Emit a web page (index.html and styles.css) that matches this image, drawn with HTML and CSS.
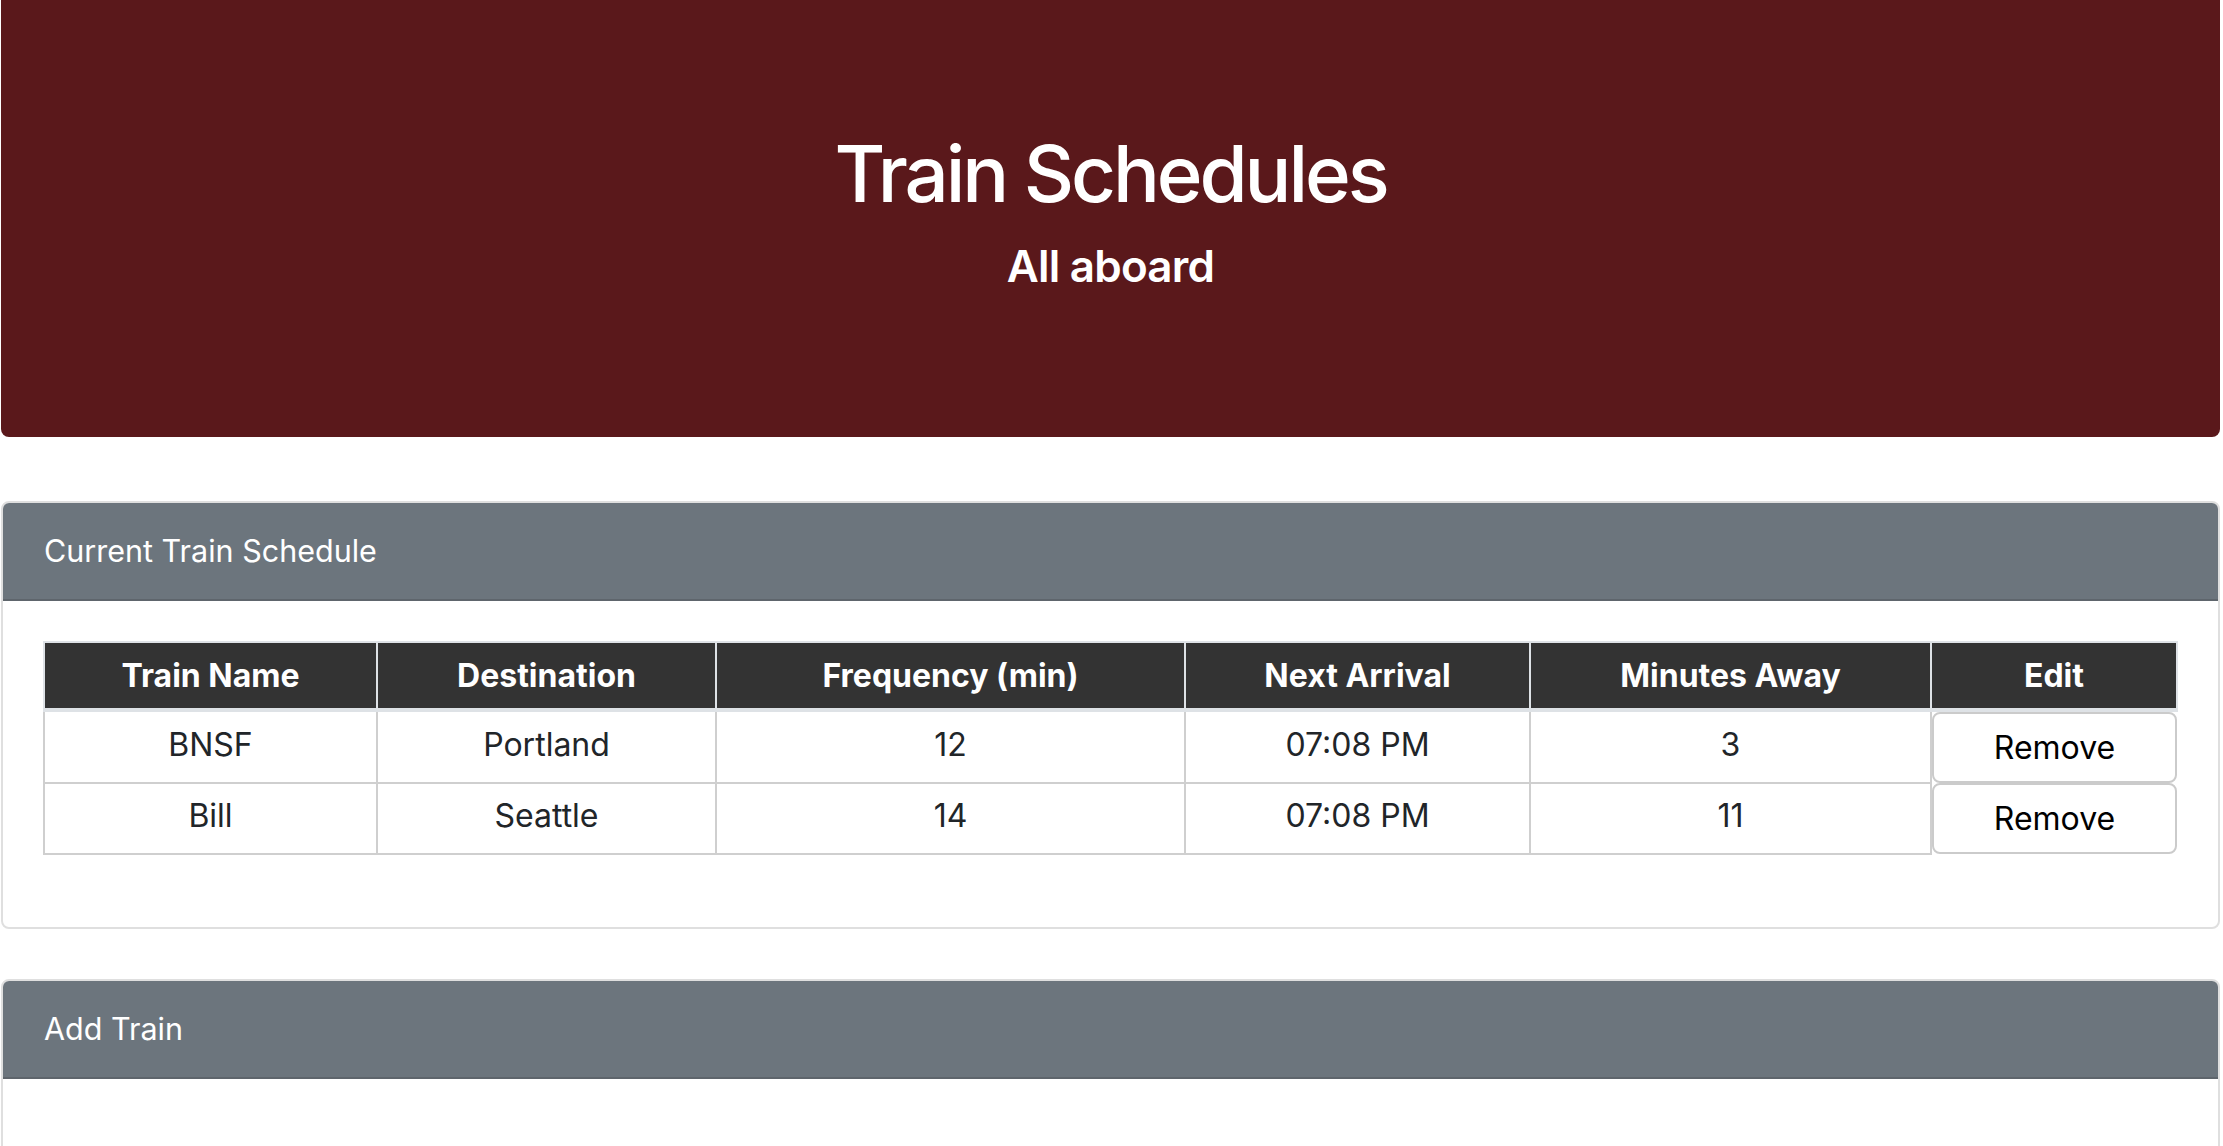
FILE: index.html
```html
<!DOCTYPE html>
<html lang="en">
<head>
<meta charset="utf-8">
<title>Train Schedules</title>
<link rel="stylesheet" href="styles.css">
</head>
<body>
<div class="page">
  <header class="jumbotron">
    <h1 class="title">Train Schedules</h1>
    <h4 class="subtitle">All aboard</h4>
  </header>

  <section class="card">
    <div class="card-header">Current Train Schedule</div>
    <div class="card-body">
      <table class="schedule">
        <colgroup>
          <col class="c1"><col class="c2"><col class="c3"><col class="c4"><col class="c5"><col class="c6">
        </colgroup>
        <thead>
          <tr>
            <th>Train Name</th>
            <th>Destination</th>
            <th>Frequency (min)</th>
            <th>Next Arrival</th>
            <th>Minutes Away</th>
            <th>Edit</th>
          </tr>
        </thead>
        <tbody>
          <tr>
            <td>BNSF</td>
            <td>Portland</td>
            <td>12</td>
            <td>07:08 PM</td>
            <td>3</td>
            <td class="edit"><button class="remove">Remove</button></td>
          </tr>
          <tr>
            <td>Bill</td>
            <td>Seattle</td>
            <td>14</td>
            <td>07:08 PM</td>
            <td>11</td>
            <td class="edit"><button class="remove">Remove</button></td>
          </tr>
        </tbody>
      </table>
    </div>
  </section>

  <section class="card">
    <div class="card-header">Add Train</div>
    <div class="card-body tall"></div>
  </section>
</div>
</body>
</html>
```

FILE: styles.css
```css
* { box-sizing: border-box; }
html, body { margin: 0; padding: 0; background: #fff; }
body {
  font-family: Inter, "Liberation Sans", sans-serif;
  color: #212529;
  font-size: 32px;
}
.page {
  padding: 0 3px 0 1px;
}
.jumbotron {
  background: #5a181b;
  color: #fff;
  border-radius: 0 0 8px 8px;
  text-align: center;
  padding: 126px 64px 128px;
  margin-bottom: 64px;
}
.title {
  margin: 0 0 18px;
  font-size: 78px;
  font-weight: 500;
  line-height: 96px;
  letter-spacing: -3.1px;
}
.subtitle {
  margin: 0 0 16px;
  font-size: 44px;
  font-weight: 600;
  line-height: 53px;
  letter-spacing: -0.8px;
}
.card {
  border: 2px solid #dfdfdf;
  border-radius: 8px;
  margin-bottom: 50px;
  overflow: hidden;
}
.card-header {
  background: #6c757d;
  color: #fff;
  font-size: 30.5px;
  line-height: 48px;
  padding: 24px 41px;
  border-bottom: 2px solid #5e656c;
}
.card-body {
  padding: 40px;
}
.card-body.tall {
  min-height: 300px;
}
.schedule {
  width: 100%;
  border-collapse: collapse;
  margin-bottom: 32px;
  text-align: center;
}
.c1 { width: 333px; }
.c2 { width: 339px; }
.c3 { width: 469px; }
.c4 { width: 345px; }
.c5 { width: 401px; }
.c6 { width: 246px; }
.schedule th {
  background: #333333;
  color: #fff;
  font-weight: 700;
  font-size: 32px;
  line-height: 45px;
  padding: 10px 8px;
  border: 2px solid #dee2e6;
  border-bottom-width: 4px;
}
.schedule td {
  border: 2px solid #cfcfcf;
  font-size: 32px;
  line-height: 45px;
  padding: 5px 8px 11px;
  vertical-align: middle;
  color: #212529;
}
.schedule td.edit {
  border: none;
  padding: 0;
}
.remove {
  display: block;
  width: 100%;
  height: 71px;
  margin: 0;
  background: #fff;
  border: 2px solid #cbcbcb;
  border-radius: 8px;
  font-family: Inter, "Liberation Sans", sans-serif;
  font-size: 32px;
  color: #000;
  padding: 0;
}
```
